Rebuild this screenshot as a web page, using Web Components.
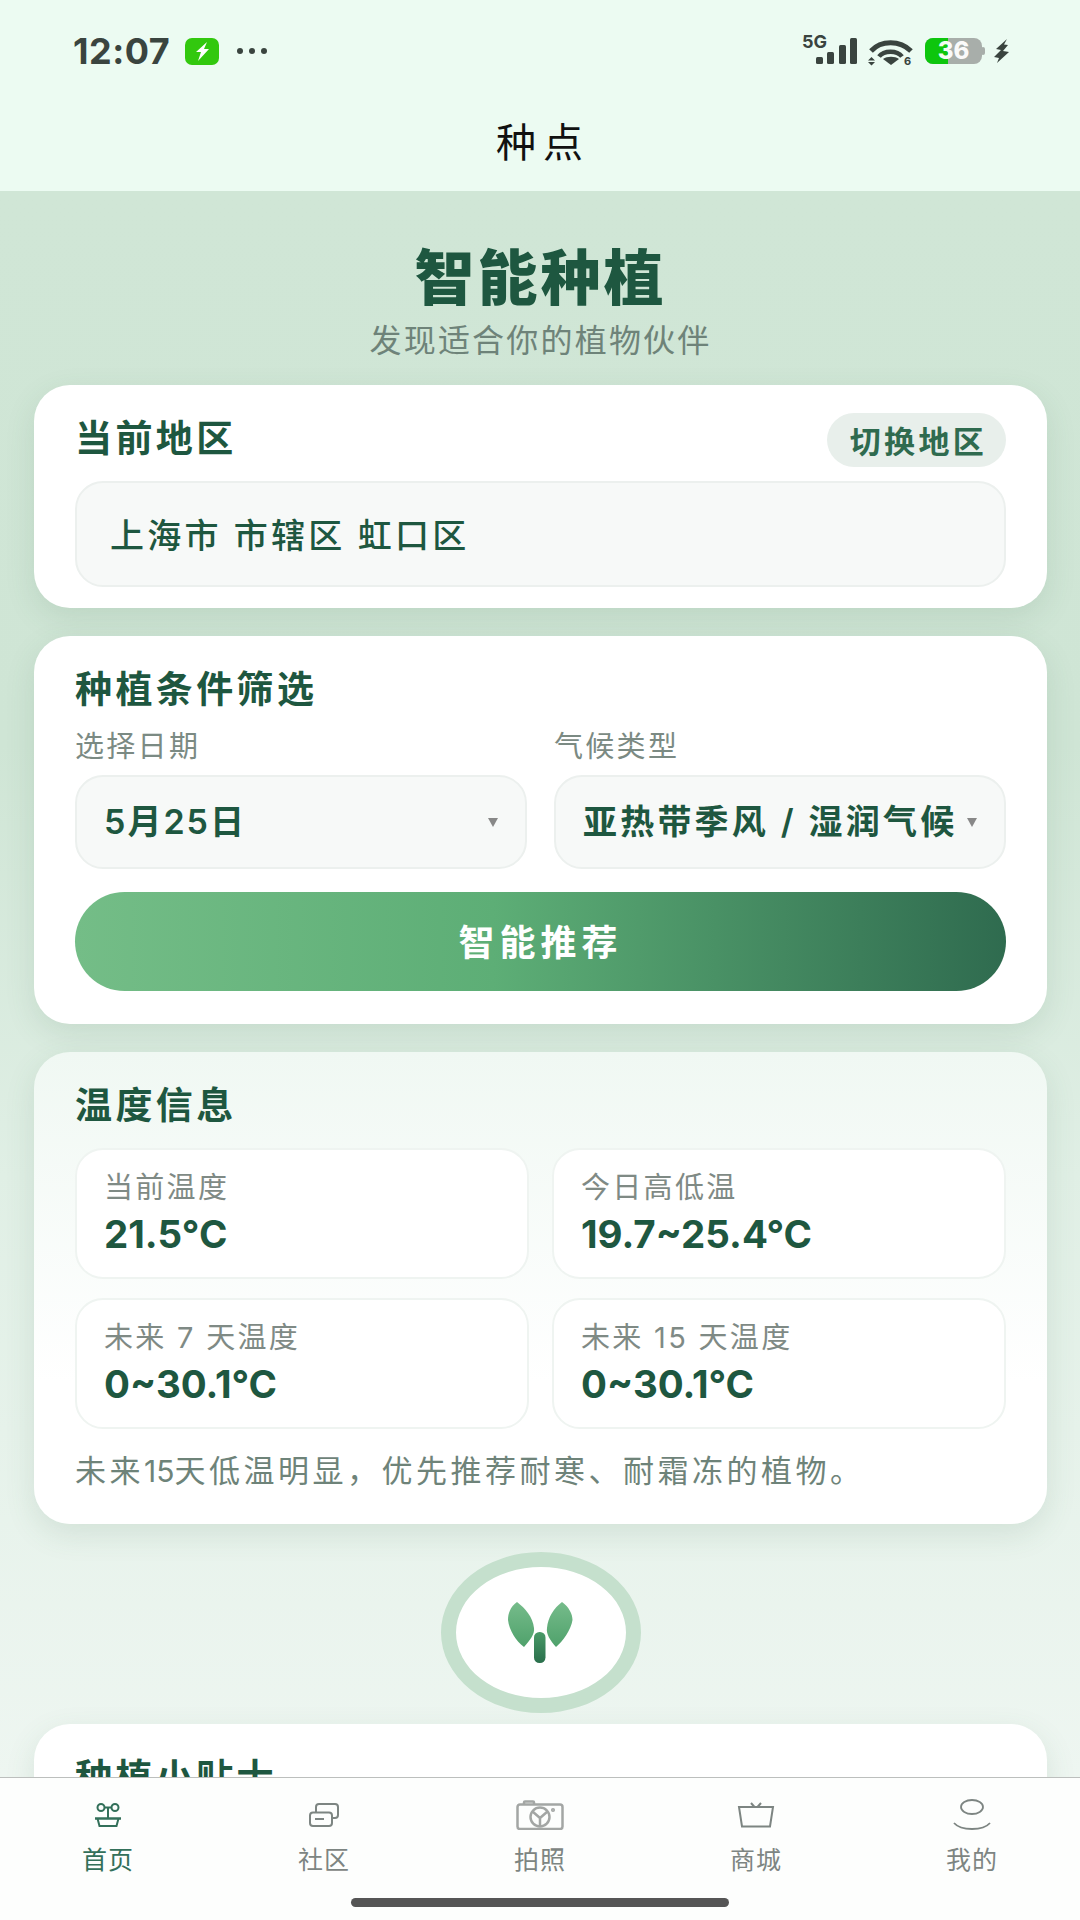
<!DOCTYPE html>
<html lang="zh">
<head>
<meta charset="utf-8">
<style>
  html, body { margin: 0; padding: 0; }
  body { font-family: "Inter", "Noto Sans CJK SC", sans-serif; }
</style>
</head>
<body>
<app-shell>
  <status-bar slot="top"></status-bar>
  <h-title slot="top">种点</h-title>

  <hero-head title="智能种植" sub="发现适合你的植物伙伴"></hero-head>

  <plant-card heading="当前地区" style="--top:0px;--pb:21px">
    <region-pill slot="action">切换地区</region-pill>
    <region-box>上海市 市辖区 虹口区</region-box>
  </plant-card>

  <plant-card heading="种植条件筛选" style="--top:28px;--pb:33px;--head-gap:11px">
    <filter-form></filter-form>
  </plant-card>

  <plant-card heading="温度信息" style="--top:28px;--pb:33px;--head-gap:14px;--bg:linear-gradient(180deg,#f0f8f3 0%,#ffffff 70%)">
    <temp-grid>
      <temp-cell label="当前温度" value="21.5°C"></temp-cell>
      <temp-cell label="今日高低温" value="19.7~25.4°C"></temp-cell>
      <temp-cell label="未来 7 天温度" value="0~30.1°C"></temp-cell>
      <temp-cell label="未来 15 天温度" value="0~30.1°C"></temp-cell>
    </temp-grid>
    <temp-note>未来<span style="letter-spacing:0;font-size:30px">15</span>天低温明显，优先推荐耐寒、耐霜冻的植物。</temp-note>
  </plant-card>

  <seed-badge></seed-badge>

  <plant-card heading="种植小贴士" style="--top:0px;--pb:40px"></plant-card>

  <tab-bar slot="bottom"></tab-bar>
</app-shell>

<script>
function sheet(css, html) {
  return `<style>${css}</style>${html}`;
}

class AppShell extends HTMLElement {
  constructor() {
    super();
    this.attachShadow({ mode: "open" });
    this.shadowRoot.innerHTML = sheet(`
      :host { display: flex; flex-direction: column; width: 1080px; height: 1920px; overflow: hidden; background: #fff; }
      header { flex: none; height: 191px; background: #ecfbf2; }
      main { flex: 1; min-height: 0; overflow: hidden; padding: 0 33px 0 34px; box-sizing: border-box;
        background: linear-gradient(180deg, #d0e6d6 0%, #cfe5d5 35%, #e0efe5 62%, #eef6f1 100%); }
      footer { flex: none; }
    `, `<header><slot name="top"></slot></header><main><slot></slot></main><footer><slot name="bottom"></slot></footer>`);
  }
}
customElements.define("app-shell", AppShell);

class StatusBar extends HTMLElement {
  constructor() {
    super();
    this.attachShadow({ mode: "open" });
    this.shadowRoot.innerHTML = sheet(`
      :host { display: flex; align-items: center; height: 102px; padding: 0 70px 0 73px; box-sizing: border-box; color: #3a443f; }
      .time { font-size: 36px; font-weight: 700; font-family: "Inter", sans-serif; letter-spacing: .5px; width: 112px; }
      .dots { margin-left: 18px; display: flex; gap: 6px; }
      .dots i { width: 6px; height: 6px; border-radius: 50%; background: #3a443f; }
      .right { margin-left: auto; display: flex; align-items: center; }
      svg { display: block; }
      .net { position: relative; width: 55px; height: 40px; }
      .net b { position: absolute; left: 0; top: 2px; font: 700 18px/18px "Inter", sans-serif; }
      .batt { position: relative; margin-left: 11px; width: 60px; height: 26px; }
      .batt span { position: absolute; left: 0; right: 3px; top: 0; text-align: center; font: 800 24px/26px "Inter", sans-serif; color: #fff; opacity: .95; }
    `, `
      <span class="time">12:07</span>
      <svg width="34" height="27" viewBox="0 0 34 27"><rect width="34" height="27" rx="7" fill="#32c80e"/><path d="M22 4 11 14h5l-3 9 11-12h-5z" fill="#fff"/></svg>
      <span class="dots"><i></i><i></i><i></i></span>
      <span class="right">
        <span class="net"><b>5G</b>
          <svg style="position:absolute;left:14px;top:7px" width="41" height="26" viewBox="0 0 41 26" fill="#3a443f">
            <rect x="0" y="19" width="7" height="7" rx="1.500"/><rect x="11" y="14" width="7" height="12" rx="1.500"/><rect x="23" y="7" width="7" height="19" rx="1.500"/><rect x="34" y="0" width="7" height="26" rx="1.500"/>
          </svg>
        </span>
        <svg style="margin-left:11px" width="46" height="34" viewBox="0 -6 46 34" fill="none">
          <path d="M3 11C13 0 32 0 43 11" stroke="#3a443f" stroke-width="5"/>
          <path d="M11 16.500C16 10 29 10 34 16.500" stroke="#3a443f" stroke-width="4.500"/>
          <path d="M23 25l-8-6c4-3 12-3 16 0z" fill="#3a443f"/>
          <path d="M0 20.500l3.500-3.500 3.500 3.500zM0 22h7l-3.500 3.500z" fill="#3a443f"/>
          <text x="36" y="25" font-size="11" font-weight="700" font-family="Inter" fill="#3a443f">6</text>
        </svg>
        <span class="batt">
          <svg width="60" height="26" viewBox="0 0 60 26"><rect x="56" y="9" width="4" height="8" rx="2" fill="#a8aeaa"/><rect width="57" height="26" rx="8" fill="#a8aeaa"/><path d="M8 0h15v26H8a8 8 0 0 1-8-8V8a8 8 0 0 1 8-8z" fill="#0dc60d"/></svg>
          <span>36</span>
        </span>
        <svg style="margin-left:9px" width="16" height="24" viewBox="0 0 16 24"><path d="M13 0 2 10l5 1-7 7 5 1-2 5 12-11-6-1 5-6-4-.5z" fill="#3a443f"/></svg>
      </span>
    `);
  }
}
customElements.define("status-bar", StatusBar);

class HTitle extends HTMLElement {
  constructor() {
    super();
    this.attachShadow({ mode: "open" });
    this.shadowRoot.innerHTML = sheet(`
      :host { display: block; text-align: center; font-size: 40px; line-height: 82px; letter-spacing: 7px; padding-left: 6px; color: #111; font-weight: 400; }
    `, `<slot></slot>`);
  }
}
customElements.define("h-title", HTitle);

class HeroHead extends HTMLElement {
  constructor() {
    super();
    this.attachShadow({ mode: "open" });
    this.shadowRoot.innerHTML = sheet(`
      :host { display: block; text-align: center; height: 194px; padding-top: 52px; box-sizing: border-box; }
      h1 { margin: 0; font-size: 60px; line-height: 70px; font-weight: 900; color: #1e5740; letter-spacing: 3px; }
      p { margin: 0; font-size: 32px; line-height: 40px; color: #6e8379; letter-spacing: 2.200px; padding-top: 8px; }
    `, `<h1>${this.getAttribute("title")}</h1><p>${this.getAttribute("sub")}</p>`);
  }
}
customElements.define("hero-head", HeroHead);

class PlantCard extends HTMLElement {
  constructor() {
    super();
    this.attachShadow({ mode: "open" });
    this.shadowRoot.innerHTML = sheet(`
      :host { display: block; margin-top: var(--top, 0); }
      section { background: var(--bg, #fff); border-radius: 36px; padding: 28px 41px var(--pb, 28px); box-shadow: 0 10px 30px rgba(60, 110, 80, .13); }
      .head { display: flex; align-items: center; justify-content: space-between; height: 54px; margin-bottom: var(--head-gap, 14px); }
      h2 { margin: 0; padding-bottom: 8px; font-size: 37px; font-weight: 700; color: #1e5740; letter-spacing: 3.400px; }
    `, `<section><div class="head"><h2>${this.getAttribute("heading")}</h2><slot name="action"></slot></div><slot></slot></section>`);
  }
}
customElements.define("plant-card", PlantCard);

class RegionPill extends HTMLElement {
  constructor() {
    super();
    this.attachShadow({ mode: "open" });
    this.shadowRoot.innerHTML = sheet(`
      :host { display: block; height: 54px; line-height: 57px; padding: 0 19px 0 23px; border-radius: 27px; background: #e8efeb; color: #2f6b4f; font-size: 31px; font-weight: 700; letter-spacing: 3.300px; }
    `, `<slot></slot>`);
  }
}
customElements.define("region-pill", RegionPill);

class RegionBox extends HTMLElement {
  constructor() {
    super();
    this.attachShadow({ mode: "open" });
    this.shadowRoot.innerHTML = sheet(`
      :host { display: block; height: 106px; line-height: 106px; box-sizing: border-box; padding: 0 33px; border: 2px solid #ecf0ee; border-radius: 28px; background: #f7f9f8; color: #1e5740; font-size: 34px; font-weight: 500; letter-spacing: 3.200px; }
    `, `<slot></slot>`);
  }
}
customElements.define("region-box", RegionBox);

class FilterForm extends HTMLElement {
  constructor() {
    super();
    this.attachShadow({ mode: "open" });
    this.shadowRoot.innerHTML = sheet(`
      :host { display: block; }
      .cols { display: grid; grid-template-columns: 1fr 1fr; column-gap: 27px; }
      label { display: block; font-size: 29px; line-height: 36px; color: #7b8a83; letter-spacing: 2.300px; margin-bottom: 10px; }
      .sel { display: flex; align-items: center; height: 94px; box-sizing: border-box; padding: 0 27px; border: 2px solid #ecf0ee; border-radius: 28px; background: #f7f9f8; color: #1e5740; font-size: 34px; font-weight: 600; letter-spacing: 3.200px; white-space: nowrap; }
      .sel span { padding-bottom: 6px; }
      .sel .date { letter-spacing: 2px; }
      .sel i { margin-left: auto; width: 0; height: 0; border: 5px solid transparent; border-top: 9px solid #888; border-bottom: 0; }
      button { display: block; width: 100%; height: 99px; margin-top: 23px; padding: 0 0 4px; border: 0; border-radius: 50px; color: #fff; font: 700 36px "Inter", "Noto Sans CJK SC", sans-serif; letter-spacing: 5px;
        background: linear-gradient(90deg, #74bd87 0%, #5dae76 45%, #2f6b4f 100%); }
    `, `
      <div class="cols">
        <div><label>选择日期</label><div class="sel"><span class="date">5月25日</span><i></i></div></div>
        <div><label>气候类型</label><div class="sel"><span>亚热带季风 / 湿润气候</span><i></i></div></div>
      </div>
      <button type="button">智能推荐</button>
    `);
  }
}
customElements.define("filter-form", FilterForm);

class TempGrid extends HTMLElement {
  constructor() {
    super();
    this.attachShadow({ mode: "open" });
    this.shadowRoot.innerHTML = sheet(`
      :host { display: grid; grid-template-columns: 1fr 1fr; gap: 19px 23px; }
    `, `<slot></slot>`);
  }
}
customElements.define("temp-grid", TempGrid);

class TempCell extends HTMLElement {
  constructor() {
    super();
    this.attachShadow({ mode: "open" });
    this.shadowRoot.innerHTML = sheet(`
      :host { display: block; height: 131px; box-sizing: border-box; padding: 20px 27px 0; background: #fff; border: 2px solid #eff4f1; border-radius: 28px; }
      .l { font-size: 29px; line-height: 36px; color: #7f8a85; letter-spacing: 2.300px; }
      .v { font-size: 38.500px; line-height: 48px; font-weight: 700; color: #1e5740; margin-top: 4px; }
    `, `<div class="l">${this.getAttribute("label")}</div><div class="v">${this.getAttribute("value")}</div>`);
  }
}
customElements.define("temp-cell", TempCell);

class TempNote extends HTMLElement {
  constructor() {
    super();
    this.attachShadow({ mode: "open" });
    this.shadowRoot.innerHTML = sheet(`
      :host { display: block; margin-top: 22px; font-size: 31px; line-height: 40px; color: #6e8379; letter-spacing: 3.500px; white-space: nowrap; }
    `, `<slot></slot>`);
  }
}
customElements.define("temp-note", TempNote);

class SeedBadge extends HTMLElement {
  constructor() {
    super();
    this.attachShadow({ mode: "open" });
    this.shadowRoot.innerHTML = sheet(`
      :host { display: flex; justify-content: center; padding: 28px 0 11px; }
      .ring { display: flex; align-items: center; justify-content: center; width: 200px; height: 161px; box-sizing: border-box; border: 15px solid #c5e0cd; border-radius: 50%; background: #fff; }
      svg { display: block; }
    `, `
      <div class="ring">
        <svg width="66" height="62" viewBox="0 0 66 62">
          <defs>
            <linearGradient id="lf" x1="0" y1="0" x2="0" y2="1"><stop offset="0" stop-color="#76bc8b"/><stop offset="1" stop-color="#4fa16b"/></linearGradient>
            <linearGradient id="st" x1="0" y1="0" x2="0" y2="1"><stop offset="0" stop-color="#4a9a68"/><stop offset="1" stop-color="#2a6f4c"/></linearGradient>
          </defs>
          <path d="M9 0C2 5 0 12 0 18 1 28 8 39 16 45 22 38 27 32 26 26 25 15 17 6 9 0z" fill="url(#lf)"/>
          <path d="M54 0C61 5 64.500 12 64.500 18 63 28 55 39 48 45 42 38 38 32 39 26 40 15 46 6 54 0z" fill="url(#lf)"/>
          <rect x="26" y="30" width="11.500" height="31" rx="5.500" fill="url(#st)"/>
        </svg>
      </div>
    `);
  }
}
customElements.define("seed-badge", SeedBadge);

class TabBar extends HTMLElement {
  constructor() {
    super();
    this.attachShadow({ mode: "open" });
    const stroke = 'fill="none" stroke="currentColor" stroke-width="2"';
    const tabs = [
      ["首页", "", `<svg width="28" height="24" viewBox="0 0 28 24" ${stroke}><circle cx="7" cy="4.500" r="3.500"/><circle cx="21" cy="4.500" r="3.500"/><path d="M10.500 4.500h7M14 4.500V15"/><path stroke-width="2.500" d="M1 15.500h26"/><path d="M3.500 15.500l2 7.500h17l2-7.500"/></svg>`, true],
      ["社区", "", `<svg width="30" height="24" viewBox="0 0 30 24" ${stroke}><rect x="7" y="1" width="22" height="14" rx="3"/><rect x="1" y="9.500" width="22" height="13.500" rx="3" fill="#fdfefd"/><path d="M6 16h9"/></svg>`],
      ["拍照", "cam", `<svg width="48" height="30" viewBox="0 0 48 30" fill="none" stroke="currentColor" stroke-width="2.500"><path d="M8 4.500V2.500a1 1 0 0 1 1-1h8a1 1 0 0 1 1 1v2M4 4.500h40a2.500 2.500 0 0 1 2.500 2.500v19.500a2.500 2.500 0 0 1-2.500 2.500H4a2.500 2.500 0 0 1-2.500-2.500V7A2.500 2.500 0 0 1 4 4.500z"/><circle cx="24" cy="17" r="9.500"/><path d="M24 18V26M24 18 16.500 11.500M24 18 31.500 11.500"/><circle cx="37" cy="10" r=".8"/></svg>`],
      ["商城", "", `<svg width="38" height="26" viewBox="0 0 38 26" ${stroke}><path d="M2 5h34l-3 19.500H5zM14 1l3.500 4M24 1l-3.500 4"/></svg>`],
      ["我的", "", `<svg width="38" height="32" viewBox="0 0 38 32" fill="none" stroke="currentColor" stroke-width="1.800"><ellipse cx="19" cy="8" rx="11" ry="7"/><path d="M1 24C8 32 30 32 37 24"/></svg>`],
    ];
    this.shadowRoot.innerHTML = sheet(`
      :host { display: block; position: relative; height: 143px; box-sizing: border-box; background: #fdfefd; border-top: 1px solid #bcbfbd; }
      nav { display: grid; grid-template-columns: repeat(5, 1fr); }
      .tab { display: flex; flex-direction: column; align-items: center; color: #7d8582; font-size: 25px; letter-spacing: 1px; }
      .tab.on { color: #33705a; }
      .cam .ic { color: #a3a6a4; }
      .ic { display: flex; align-items: center; justify-content: center; height: 66px; padding-top: 8px; box-sizing: border-box; }
      .t { line-height: 32px; }
      .home { position: absolute; left: 351px; width: 378px; top: 120px; height: 9px; border-radius: 5px; background: #555; }
    `, `<nav>${tabs.map(([t, c, i, on]) => `<div class="tab ${c}${on ? " on" : ""}"><div class="ic">${i}</div><div class="t">${t}</div></div>`).join("")}</nav><div class="home"></div>`);
  }
}
customElements.define("tab-bar", TabBar);
</script>
</body>
</html>
